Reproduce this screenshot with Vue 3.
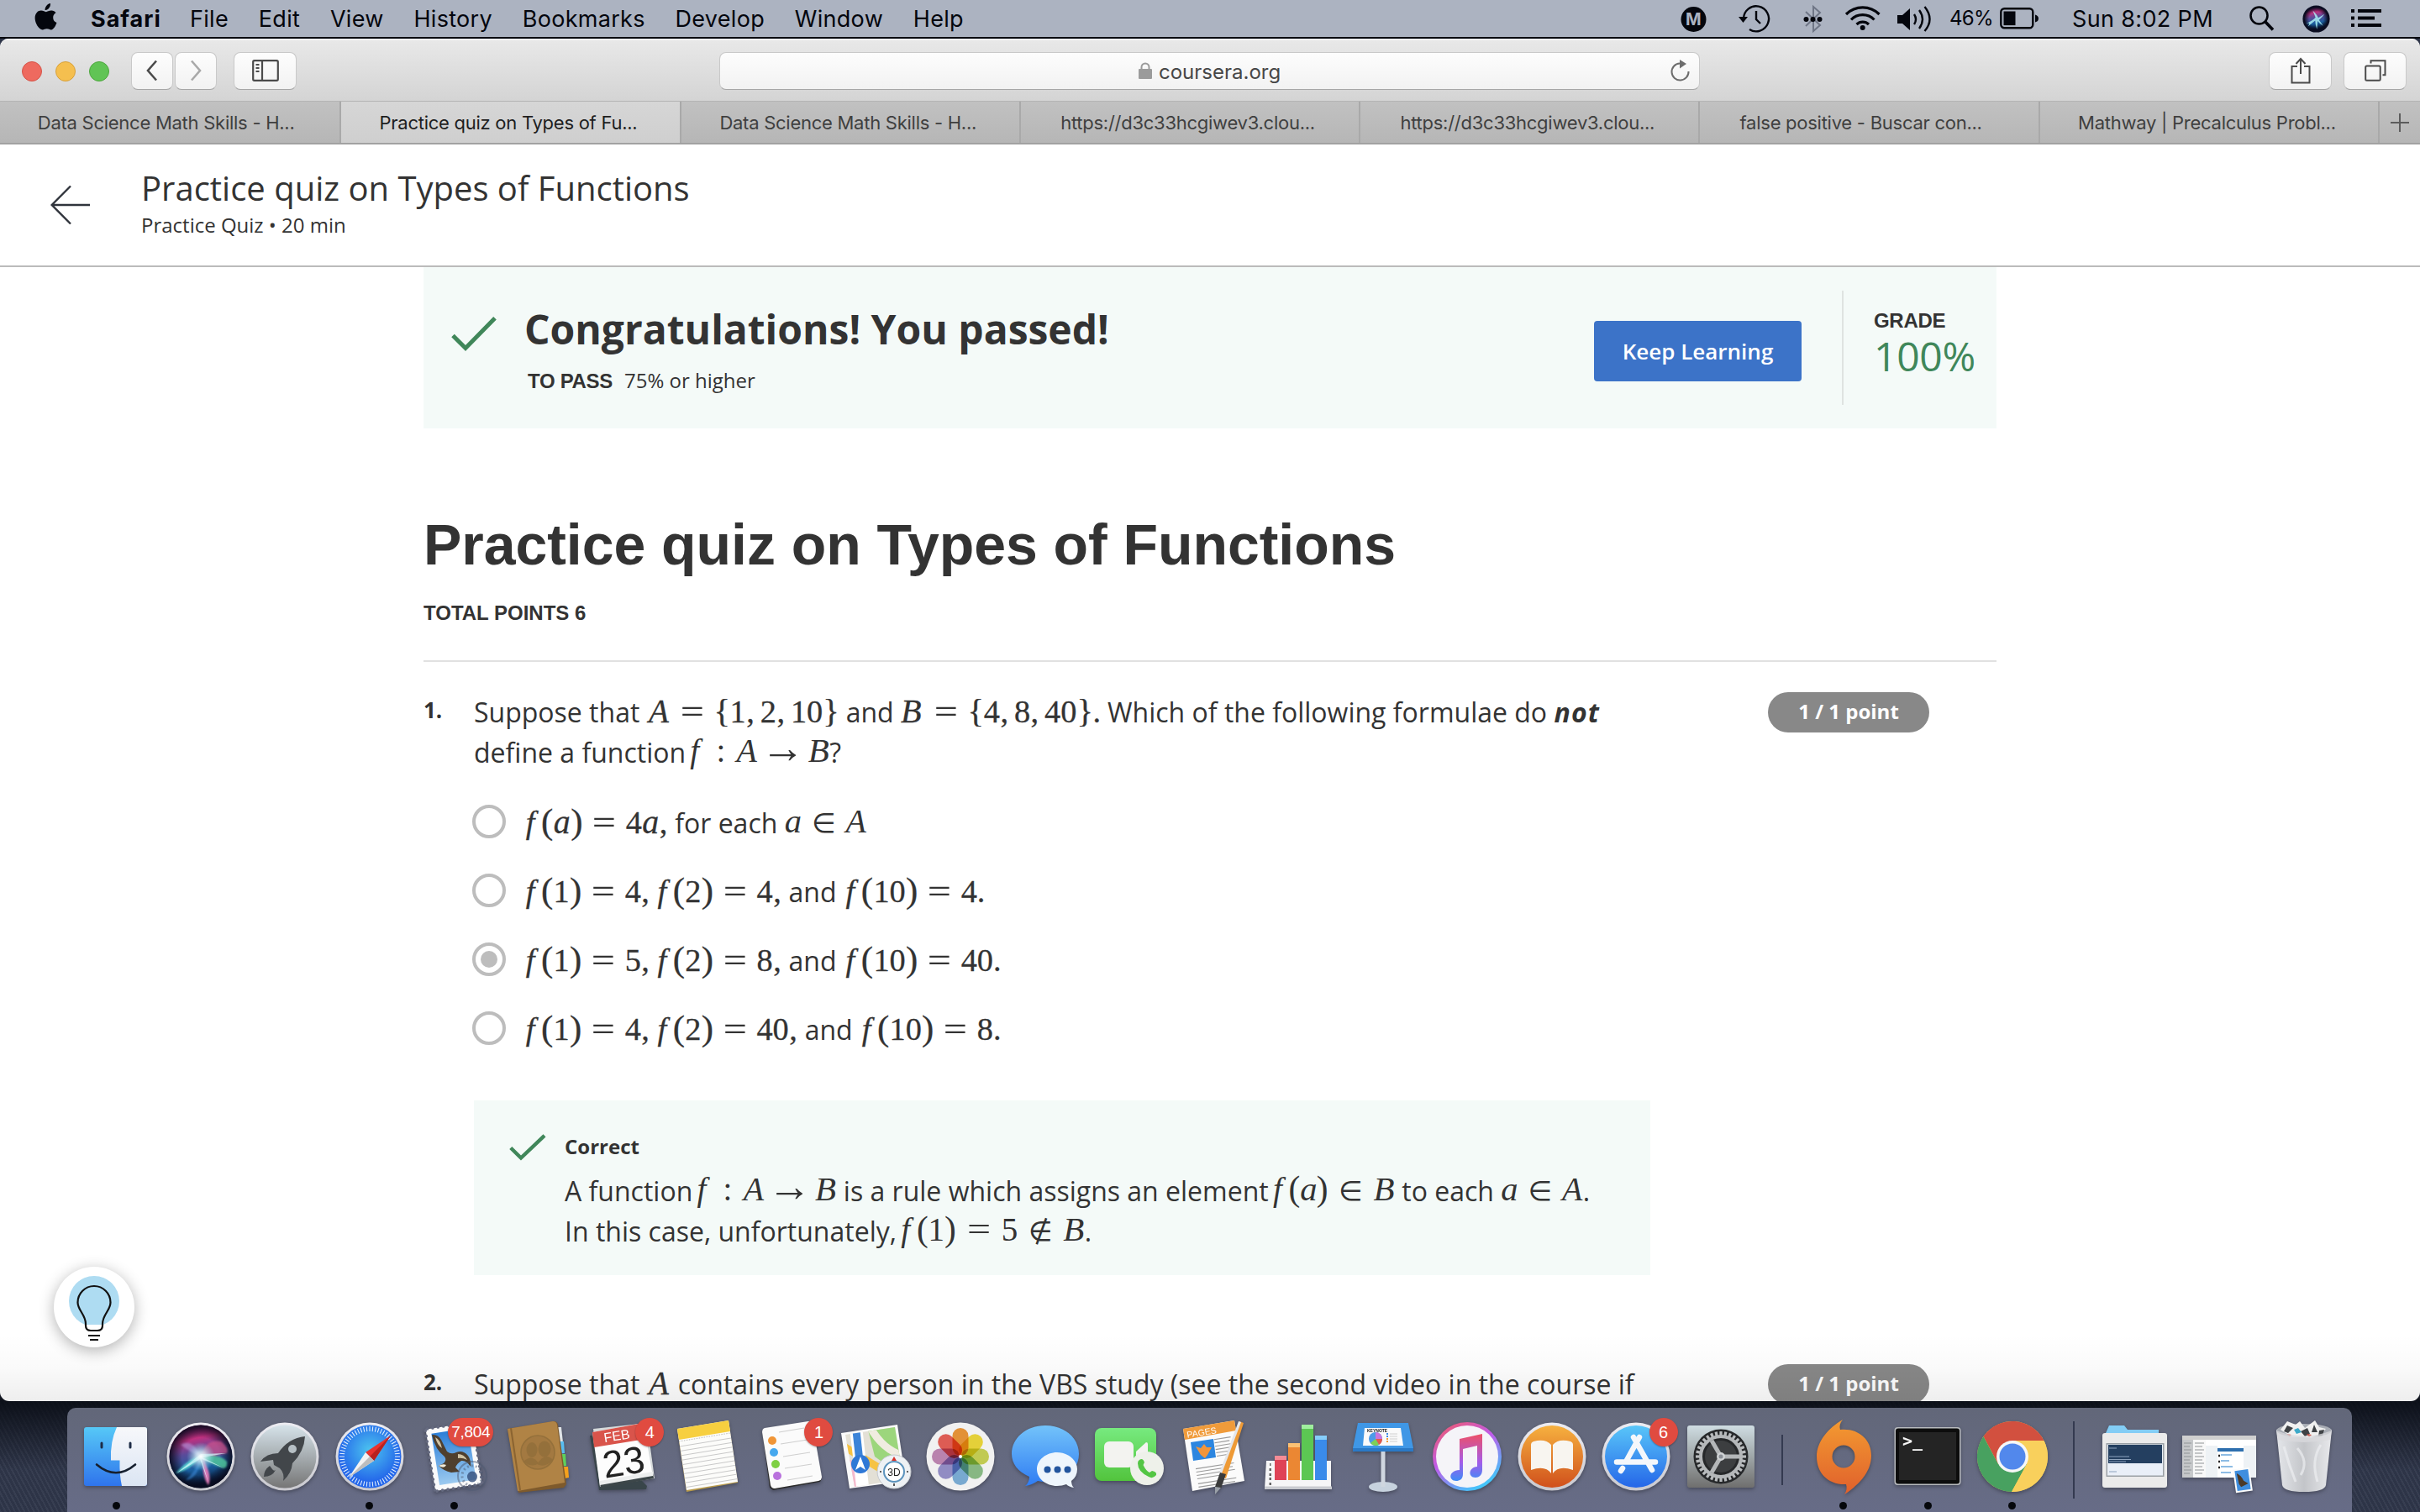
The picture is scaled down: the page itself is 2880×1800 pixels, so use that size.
<script setup>
import { h } from 'vue'

const menus = ['File', 'Edit', 'View', 'History', 'Bookmarks', 'Develop', 'Window', 'Help']
const tabs = [
  { title: 'Data Science Math Skills - H...' },
  { title: 'Practice quiz on Types of Fu...', active: true },
  { title: 'Data Science Math Skills - H...' },
  { title: 'https://d3c33hcgiwev3.clou...' },
  { title: 'https://d3c33hcgiwev3.clou...' },
  { title: 'false positive - Buscar con...', left: true },
  { title: 'Mathway | Precalculus Probl...' },
]

const kinds = {
  A: 'up', B: 'up b', f: 'f', a: 'lo', '=': 'rel eq', '∈': 'rel in', '∉': 'rel in', '→': 'rel to',
  ':': 'rel col', '(': 'par', ')': 'par', '{': 'brace', '}': 'brace', ',': 'com', '.': 'dot',
}
/* Inline formula: one box per symbol, spaced by the symbol's class. */
const Tex = (props) =>
  h('span', { class: ['tex', props.alt ? 'tex-alt' : 'tex-main'] },
    [...props.m.replace(/ /g, '')].map((c) => h('span', { class: 'g ' + (kinds[c] || 'num') }, c)))
Tex.props = ['m', 'alt']

const options = [
  { first: 'f(a) = 4a,', word: 'for each', last: 'a ∈ A', alt: true },
  { first: 'f(1) = 4, f(2) = 4,', word: 'and', last: 'f(10) = 4.' },
  { first: 'f(1) = 5, f(2) = 8,', word: 'and', last: 'f(10) = 40.', picked: true },
  { first: 'f(1) = 4, f(2) = 40,', word: 'and', last: 'f(10) = 8.' },
]

const ticks = Array.from({ length: 60 }, (_, i) => i * 6)
const teeth = Array.from({ length: 32 }, (_, i) => i * 11.25)
const petals = ['#f0993a', '#f2dc3c', '#cdd657', '#8fc28b', '#7fb3dc', '#9a94cf', '#c48bb8', '#ea6159']
const noteLines = Array.from({ length: 10 }, (_, i) => -14 + i * 5.4)
const perfX = Array.from({ length: 9 }, (_, i) => -26 + i * 6.5)
const perfY = Array.from({ length: 12 }, (_, i) => -35.7 + i * 6.5)
</script>

<template>
  <div class="desktop">
    <div class="menubar">
      <svg class="apple" viewBox="0 0 28 32"><path d="M19 0c.3 2.600-.7 4.500-2 6-1.400 1.500-2.900 2.200-4.400 2.100-.2-2.300.7-4.200 2-5.600C15.700 1.200 17.500.3 19 0zM25.500 11.300c-2.200 1.400-3.300 3.100-3.300 5.600 0 2.900 1.500 4.900 4.300 6.100-1.200 3.500-3.700 8.300-6.500 8.400-2 .1-2.600-1.200-5.200-1.200s-3.300 1.200-5.200 1.200C5.300 31.400.6 23.600.6 17.600c0-5.600 3.500-9 7.300-9 2.500 0 4.400 1.600 5.900 1.600 1.500 0 3.700-1.800 6.700-1.600 1.900.1 3.800 1 5 2.700z" fill="#04060d"/></svg>
      <b class="appname">Safari</b>
      <div class="menus"><span v-for="m in menus" :key="m">{{ m }}</span></div>
      <svg class="tray" viewBox="0 0 300 44" fill="none" stroke="#04060d">
        <circle cx="15.500" cy="23" r="15" fill="#04060d" stroke="none"/>
        <text x="15.500" y="30" text-anchor="middle" class="mega">M</text>
        <g stroke-width="2.400"><path d="M75 22a15 15 0 1 1 7 13"/><path d="M90 13v10l5 5" /></g>
        <path d="M69 20h11l-5.500 7z" fill="#04060d" stroke="none"/>
        <g stroke="#6f7686" stroke-width="2"><path d="M149 14l17 16-8 7V8l8 7-17 16"/></g>
        <g fill="#04060d" stroke="none"><circle cx="149.500" cy="23" r="3"/><circle cx="157.500" cy="23" r="3"/><circle cx="165.500" cy="23" r="3"/></g>
        <g stroke-width="3.200"><path d="M197 17a28 28 0 0 1 39.500 0"/><path d="M203 23.500a19 19 0 0 1 27.500 0"/><path d="M209.500 29a10.500 10.500 0 0 1 14.500 0"/></g>
        <circle cx="216.700" cy="33" r="3" fill="#04060d" stroke="none"/>
        <path d="M258 18h6l9-8v26l-9-8h-6z" fill="#04060d" stroke="none"/>
        <g stroke-width="2.400"><path d="M278 17q4 6 0 12"/><path d="M284 12q8 11 0 22"/><path d="M290.500 8q12 15 0 29"/></g>
      </svg>
      <span class="pct">46%</span>
      <svg class="battery" viewBox="0 0 48 26"><rect x="1.300" y="1.300" width="38" height="23" rx="4" fill="none" stroke="#04060d" stroke-width="2.400"/><rect x="4.500" y="4.500" width="14" height="16.600" fill="#04060d"/><path d="M42 8.500q4 1 4 4.500t-4 4.500z" fill="#04060d"/></svg>
      <span class="clock">Sun 8:02 PM</span>
      <svg class="lens" viewBox="0 0 30 30" fill="none" stroke="#04060d"><circle cx="11.500" cy="11.500" r="10" stroke-width="2.600"/><path d="M18.500 18.500l9.500 10" stroke-width="3.600"/></svg>
      <svg class="minisiri" viewBox="-40 -40 80 80"><circle r="39" fill="#0b0d22"/><circle r="33" fill="url(#siri)"/><circle r="34" fill="url(#dark)"/><path d="M-30 14Q-8 4-2-4L-10-24Q2-12 6-3L24-14Q14-2 8 3L20 20Q8 12 4 6L2 30Q-3 16-3 5L-24 22Q-14 8-30 14z" fill="#a8eef2" opacity=".85"/></svg>
      <svg class="listicon" viewBox="0 0 36 22" fill="#04060d"><path d="M0 0h4v4H0zM8 0h28v4H8zM0 8.500h4v4H0zM8 8.500h20v4H8zM0 17h4v4H0zM8 17h28v4H8z"/></svg>
    </div>

    <div class="window">
      <div class="toolbar">
        <i class="light red"></i><i class="light amber"></i><i class="light green"></i>
        <div class="btn nav back"><svg viewBox="0 0 16 26" fill="none" stroke="#4b4b4b" stroke-width="2.600"><path d="M13 1.500L3 13l10 11.500"/></svg></div>
        <div class="btn nav"><svg viewBox="0 0 16 26" fill="none" stroke="#a9a9a9" stroke-width="2.600"><path d="M3 1.500L13 13 3 24.500"/></svg></div>
        <div class="btn side"><svg viewBox="0 0 32 26" fill="none" stroke="#4b4b4b" stroke-width="2.200"><rect x="1.200" y="1.200" width="29.600" height="23.600" rx="1.500"/><path d="M12 1v24"/><path d="M4.500 6h4M4.500 10h4M4.500 14h4" stroke-width="1.800"/></svg></div>
        <div class="address">
          <svg class="lock" viewBox="0 0 16 20"><path d="M3.500 9V6a4.500 4.500 0 0 1 9 0v3" fill="none" stroke="#9b9b9b" stroke-width="2"/><rect width="16" height="12" y="8" rx="1" fill="#9b9b9b"/></svg>
          <span>coursera.org</span>
          <svg class="reload" viewBox="0 0 24 26" fill="none"><path d="M11 4.500A10 10 0 1 0 21.500 14" stroke="#6d6d6d" stroke-width="2"/><path d="M11 0l8 5-8 5.500z" fill="#6d6d6d"/></svg>
        </div>
        <div class="btn share"><svg viewBox="0 0 24 32" fill="none" stroke="#4b4b4b" stroke-width="2"><path d="M8 11H1.500v19.500h21V11H16M12 2v18M6.500 8L12 2l5.500 6"/></svg></div>
        <div class="btn share last"><svg viewBox="0 0 26 26" fill="none" stroke="#4b4b4b" stroke-width="2"><rect x="1.200" y="7.500" width="17.500" height="17.300" rx="1.500"/><path d="M7.500 4.500V1.200h17v17h-3"/></svg></div>
      </div>

      <div class="tabs">
        <div v-for="(t, i) in tabs" :key="i" class="tab" :class="{ active: t.active, left: t.left }">{{ t.title }}</div>
        <div class="plus"><svg viewBox="0 0 24 24" stroke="#5c5c5c" stroke-width="2"><path d="M12 1v22M1 12h22"/></svg></div>
      </div>

      <div class="page">
        <header class="head">
          <svg class="arrow" viewBox="0 0 48 48" fill="none" stroke="#30343c" stroke-width="2.400"><path d="M47 24H2M24 1.500L1.700 24 24 46.500"/></svg>
          <div>
            <div class="title">Practice quiz on Types of Functions</div>
            <div class="sub">Practice Quiz • 20 min</div>
          </div>
        </header>

        <main class="content">
          <section class="banner">
            <svg class="bigcheck" viewBox="0 0 54 42" fill="none" stroke="#40875a" stroke-width="5"><path d="M2 22.500l15 15L52 1.800"/></svg>
            <div class="verdict">
              <h2>Congratulations! You passed!</h2>
              <p><b>TO PASS</b><span>75% or higher</span></p>
            </div>
            <div class="keep">Keep Learning</div>
            <div class="grade"><b>GRADE</b><span>100%</span></div>
          </section>

          <h1>Practice quiz on Types of Functions</h1>
          <div class="points">TOTAL POINTS 6</div>

          <section class="question">
            <div class="no">1.</div>
            <div class="body">
              <div class="text">Suppose that <Tex m="A = {1, 2, 10}" /> and <Tex m="B = {4, 8, 40}." /> Which of the following formulae do <b class="not">not</b><br>define a function <Tex m="f : A → B" alt="1" />?</div>
              <div class="options">
                <div v-for="(o, i) in options" :key="i" class="option">
                  <i class="radio" :class="{ picked: o.picked }"></i>
                  <span><Tex :m="o.first" /> {{ o.word }} <Tex :m="o.last" :alt="o.alt" /></span>
                </div>
              </div>
              <div class="feedback">
                <svg class="check" viewBox="0 0 44 32" fill="none" stroke="#40875a" stroke-width="4.400"><path d="M1.800 16.500L14 28.500 42 1.800"/></svg>
                <div>
                  <b>Correct</b>
                  <div class="text">A function <Tex m="f : A → B" alt="1" /> is a rule which assigns an element <Tex m="f(a) ∈ B" alt="1" /> to each <Tex m="a ∈ A" alt="1" />.<br>In this case, unfortunately, <Tex m="f(1) = 5 ∉ B" alt="1" />.</div>
                </div>
              </div>
            </div>
            <div class="pill">1 / 1 point</div>
          </section>

          <section class="question second">
            <div class="no">2.</div>
            <div class="body"><div class="text">Suppose that <Tex m="A" /> contains every person in the VBS study (see the second video in the course if</div></div>
            <div class="pill">1 / 1 point</div>
          </section>
        </main>
        <div class="fade"></div>
        <div class="bulb">
          <svg viewBox="-48 -48 96 96" fill="none" stroke="#111" stroke-width="2.200"><circle cy="-7" r="30" fill="#aedcf2" stroke="none"/><path d="M-9.500 21h19v3q-1 4-4 4H-5.500q-3 0-4-4z" fill="#fff" stroke="none"/><path d="M-10 21V22q0 6 6 6H4q6 0 6-6V20C10 9 19.500 4 19.500-5.500a19.500 19.500 0 0 0-39 0C-19.500 4-10 9-10 20z"/><path d="M-7 34H7M-5 39H5"/></svg>
        </div>
      </div>
    </div>

    <div class="dock">
      <!-- Finder -->
      <div class="slot run"><svg viewBox="-50 -50 100 100">
        <defs>
          <linearGradient id="fin" x2="0" y2="1"><stop stop-color="#56c8f7"/><stop offset="1" stop-color="#2f74ec"/></linearGradient>
          <linearGradient id="pale" x2="0" y2="1"><stop stop-color="#f7f8fb"/><stop offset="1" stop-color="#dbe5f3"/></linearGradient>
          <linearGradient id="rim" x2="0" y2="1"><stop stop-color="#ececf2"/><stop offset="1" stop-color="#c9c9cf"/></linearGradient>
        </defs>
        <rect x="-38" y="-35" width="75" height="70" rx="3" fill="url(#fin)"/>
        <path d="M1-35H34q3 0 3 3V32q0 3-3 3H7Q4 22 4.500 4.500H-6Q-7-18 1-35z" fill="url(#pale)"/>
        <path d="M-17-16v5M17-16v5" stroke="#1d2c46" stroke-width="3" stroke-linecap="round"/>
        <path d="M-23 9.500Q0 29 23 9.500" fill="none" stroke="#16202f" stroke-width="2.600" stroke-linecap="round"/>
      </svg></div>
      <!-- Siri -->
      <div class="slot"><svg viewBox="-50 -50 100 100">
        <defs>
          <linearGradient id="siri" x2=".2" y2="1"><stop stop-color="#4a1752"/><stop offset=".28" stop-color="#c0307f"/><stop offset=".5" stop-color="#5a4b9a"/><stop offset=".75" stop-color="#1a5fa0"/><stop offset="1" stop-color="#081530"/></linearGradient>
          <radialGradient id="dark"><stop offset=".6" stop-color="#07081a" stop-opacity="0"/><stop offset="1" stop-color="#07081a" stop-opacity=".9"/></radialGradient>
          <radialGradient id="glow"><stop stop-color="#fff"/><stop offset=".35" stop-color="#d8f6fa" stop-opacity=".75"/><stop offset="1" stop-color="#7ad8e8" stop-opacity="0"/></radialGradient>
          <filter id="soft"><feGaussianBlur stdDeviation="1.300"/></filter>
        </defs>
        <circle r="40.500" fill="url(#rim)"/><circle r="37.500" fill="url(#siri)"/><circle r="37.500" fill="url(#dark)"/>
        <g filter="url(#soft)">
          <path d="M0 0Q-10-22-24-14Q-14-6 0 0" fill="#b79ae0" opacity=".55"/>
          <path d="M0 0Q6-22 24-18Q34-10 31-4Q12 0 0 0" fill="#d2528a" opacity=".7"/>
          <path d="M0 0Q22-4 31 6Q32 16 24 13Q10 8 0 0" fill="#4fc39a" opacity=".85"/>
          <path d="M0 0Q-12 0-30 20Q-12 16 0 0" fill="#5be0d8" opacity=".85"/>
          <path d="M0 0Q-6 18-18 28Q-2 26 0 0" fill="#3a8ad8" opacity=".6"/>
          <path d="M2 2Q14 22 9 34Q2 26 2 2" fill="#ef7fc0" opacity=".9"/>
        </g>
        <path d="M-29 20L0-3L30-4L2 1L28 14L1 3L9 31L-1 3z" fill="#dffcff" opacity=".7"/>
        <circle r="17" fill="url(#glow)"/>
      </svg></div>
      <!-- Launchpad -->
      <div class="slot"><svg viewBox="-50 -50 100 100">
        <defs><linearGradient id="lp" x2="0" y2="1"><stop stop-color="#d6e3ea"/><stop offset="1" stop-color="#767676"/></linearGradient></defs>
        <circle r="40.500" fill="url(#rim)"/><circle r="37.500" fill="url(#lp)"/>
        <path d="M24-24Q4-22-8-4Q-22-4-29 6L-14 4L-13 10L-6 14Q0 20-2 29Q8 20 9 8Q23-6 24-24z" fill="#42464a"/><circle cx="9" cy="-9" r="5" fill="#b6bfc4"/>
        <path d="M-18 11Q-25 16-25 24Q-15 24-11 16Q-13 18-15 15z" fill="#42464a"/>
      </svg></div>
      <!-- Safari -->
      <div class="slot run"><svg viewBox="-50 -50 100 100">
        <defs><radialGradient id="sf" cy=".4"><stop stop-color="#4cc4ef"/><stop offset="1" stop-color="#2467ea"/></radialGradient></defs>
        <circle r="40.500" fill="url(#rim)"/><circle r="37.500" fill="url(#sf)"/>
        <path v-for="t in ticks" :key="t" d="M0-36v6" :transform="`rotate(${t})`" stroke="#e8f3fd" stroke-width="1"/>
        <path d="M25-25L5 5-5-5z" fill="#e8332f"/><path d="M25-25L5 5 0 0z" fill="#b8221f"/><path d="M-25 25L5 5-5-5z" fill="#f3f3f3"/><path d="M-25 25L5 5 0 0z" fill="#bdbdbd"/>
      </svg></div>
      <!-- Mail -->
      <div class="slot run"><svg viewBox="-50 -50 100 100">
        <defs><linearGradient id="sky" x2="0" y2="1"><stop stop-color="#2c7fd8"/><stop offset="1" stop-color="#9ccaf0"/></linearGradient></defs>
        <g transform="rotate(-9)"><rect x="-28" y="-37" width="56" height="74" fill="#fafafa"/>
          <g fill="#656a80"><circle v-for="p in perfX" :key="'t' + p" :cx="p" cy="-37.500" r="1.800"/><circle v-for="p in perfX" :key="'b' + p" :cx="p" cy="37.500" r="1.800"/><circle v-for="p in perfY" :key="'l' + p" cx="-28.500" :cy="p" r="1.800"/><circle v-for="p in perfY" :key="'r' + p" cx="28.500" :cy="p" r="1.800"/></g>
          <rect x="-22" y="-31" width="44" height="62" fill="url(#sky)"/></g>
        <path d="M-26-26Q-19-27-15-20Q-11-12-8-6Q-3-2 3-5Q11-8 17-1Q21 5 20 12Q15 4 9 5Q4 8 2 13L7 18L-3 19Q-12 17-18 11L-12 8Q-8 4-11 0Q-22-8-26-26z" fill="#4f3f2e"/><path d="M-22-23Q-16-20-14-10Q-20-14-22-23M5-3Q12-3 16 4Q10 1 5 2z" fill="#d0c3a4"/><path d="M-18 11Q-13 8-9 10Q-11 15-18 11z" fill="#f1ead8"/>
        <circle cx="22" cy="23" r="17" fill="none" stroke="#4d5a72" stroke-width="2" opacity=".5"/><circle cx="22" cy="23" r="12" fill="none" stroke="#4d5a72" stroke-width="3" stroke-dasharray="2 3" opacity=".5"/><ellipse cx="22" cy="24" rx="6" ry="6.500" fill="#334e7a" opacity=".8"/>
      </svg><span class="badge wide">7,804</span></div>
      <!-- Contacts -->
      <div class="slot"><svg viewBox="-50 -50 100 100">
        <path d="M18-35l9 0 2 18-8 1z" fill="#dfe3e6"/><path d="M22-18l8 0 1 14-8 1z" fill="#59bdf0"/><path d="M24-3l8 0 1 14-8 1z" fill="#5fd05c"/><path d="M26 12l9 0 1 13-9 2z" fill="#f5a11c"/>
        <path d="M-37-33L18-42q4 0 5 4L33 33l-3 4L-24 43z" fill="#7e5a2c"/><path d="M-37-33L17-42q4 0 5 4L31 31-25 41z" fill="#b08345"/><path d="M-33-34L-22 40" stroke="#8b6431" stroke-width="2"/>
        <circle cx="-1" cy="-5" r="20" fill="#a37941" stroke="#94703b" stroke-width="1.600"/>
        <g fill="#94703b"><ellipse cx="-8" cy="-8" rx="6.500" ry="9"/><path d="M-18 6Q-8-4 0 8Q-8 14-18 6z"/><ellipse cx="7" cy="-9" rx="7.500" ry="9.500"/><path d="M-2 9Q8-6 17 4Q8 14-2 9z"/></g>
      </svg></div>
      <!-- Calendar -->
      <div class="slot"><svg viewBox="-50 -50 100 100">
        <path d="M-39-25l8 0 60 60-1 4L-28 40z" fill="#39454a"/><path d="M-35-33L29-40l9 66L-27 36z" fill="#d6dadb"/><path d="M-36-29L25-40 36 24-27 35z" fill="#fdfdfd"/><path d="M-36-29L25-40 28-21-34-11z" fill="#d9544b"/>
        <path d="M-27 31L36 20l1 6L-26 38z" fill="#3c4649"/><path d="M-27 29L36 18v5L-27 34z" fill="#eceeee"/>
        <g transform="rotate(-9)"><text x="-3" y="-20" text-anchor="middle" class="feb">FEB</text><text x="0" y="22" text-anchor="middle" class="day">23</text></g>
      </svg><span class="badge">4</span></div>
      <!-- Notes -->
      <div class="slot"><svg viewBox="-50 -50 100 100">
        <path d="M-36-32L25-42 36 31-25 42z" fill="#b89a4a"/><path d="M-36-33L25-43 36 30-25 40z" fill="#fcfcfa"/><path d="M-36-33L25-43 27-30-34-20z" fill="#f7cf3f"/><path d="M-34-18L27-28" stroke="#bbb" stroke-width="1" stroke-dasharray="1.500 1.500"/>
        <path v-for="y in noteLines" :key="y" :d="`M${-33 + (y + 14) * 0.15} ${y + 2}l61-10`" stroke="#c9c9c9" stroke-width="1"/>
      </svg></div>
      <!-- Reminders -->
      <div class="slot"><svg viewBox="-50 -50 100 100">
        <path d="M-35-31L22-41 36 26l-2 4L-22 40l-4-3z" fill="#2b2b2b"/><path d="M-32-34L20-42q4 0 5 4L36 24q0 4-4 5L-20 38q-4 0-5-4L-35-29q0-4 3-5z" fill="#fbfbfb"/>
        <circle cx="-23" cy="-19" r="5" fill="#f09537"/><circle cx="-21" cy="-5" r="5" fill="#46a8ee"/><circle cx="-19" cy="9" r="5" fill="#7fd044"/><circle cx="-17" cy="23" r="5" fill="#b972dd"/>
        <path d="M-15-29l30-5M-13-15l32-5M-10 0l32-5M-8 14l32-5M-5 28l30-5" stroke="#cfcfcf" stroke-width="1.200"/>
      </svg><span class="badge">1</span></div>
      <!-- Maps -->
      <div class="slot"><svg viewBox="-50 -50 100 100">
        <defs><clipPath id="mp"><path d="M-37-26L22-35 32 27-26 36z"/></clipPath></defs>
        <path d="M-42-28L25-38 35 29-32 38z" fill="#fafafa"/>
        <g clip-path="url(#mp)"><path d="M-50-50H50V50H-50z" fill="#e3e0d6"/><path d="M-12-40H40V30L-2 0z" fill="#9cd67c"/><path d="M-8-36Q8-6 36 0" stroke="#f0ece0" stroke-width="9" fill="none"/><path d="M-42-14L40 36" stroke="#f6c344" stroke-width="9"/><path d="M-40 0l18 8v30h-20z" fill="#f4b9cd"/><path d="M-25-40L-16 40" stroke="#fff" stroke-width="15"/><path d="M-25-40L-20 6" stroke="#3c84d8" stroke-width="9"/></g>
        <circle cx="-19" cy="9" r="11" fill="#2f78d6"/><path d="M-19 0l6 16-6-4-6 4z" fill="#fff"/>
        <circle cx="21" cy="18" r="20" fill="#eef1f4" stroke="#c4c8cd"/><circle cx="21" cy="18" r="12" fill="#fff" stroke="#5c93bd" stroke-width="2"/><path d="M21 0l3 5h-6z" fill="#d6322a"/><path d="M21 32v3M4 18h2M36 18h2" stroke="#333" stroke-width="1.600"/><text x="21" y="22.500" text-anchor="middle" class="three">3D</text>
      </svg></div>
      <!-- Photos -->
      <div class="slot"><svg viewBox="-50 -50 100 100"><circle r="40.500" fill="#f1f1f1"/>
        <g class="petals"><rect v-for="(c, i) in petals" :key="c" x="-9.500" y="-34" width="19" height="33" rx="9.500" :fill="c" :transform="`rotate(${i * 45})`"/></g><circle r="2" fill="#fff"/>
      </svg></div>
      <!-- Messages -->
      <div class="slot"><svg viewBox="-50 -50 100 100">
        <defs><linearGradient id="msg" x2="0" y2="1"><stop stop-color="#73c3fa"/><stop offset="1" stop-color="#2f7cf3"/></linearGradient></defs>
        <path d="M0-37C23-37 40-22 40-3S23 30 0 30q-5 0-9-1-7 5-15 6 5-4 5-11C-33 18-40 8-40-3-40-22-23-37 0-37z" fill="url(#msg)"/>
        <path d="M14-5C27-5 38 4 38 15q0 9-7 14 0 5 3 8-6-1-9-4-5 2-11 2C1 35-10 26-10 15S1-5 14-5z" fill="#eef5fc"/><g fill="#23559e"><circle cx="2.500" cy="15.500" r="4"/><circle cx="14.500" cy="15.500" r="4"/><circle cx="26.500" cy="15.500" r="4"/></g>
      </svg></div>
      <!-- FaceTime -->
      <div class="slot"><svg viewBox="-50 -50 100 100">
        <defs><linearGradient id="ft" x2="0" y2="1"><stop stop-color="#77ea7f"/><stop offset="1" stop-color="#52c43d"/></linearGradient></defs>
        <rect x="-41" y="-34" width="73" height="63" rx="8" fill="url(#ft)"/><rect x="-30" y="-18" width="35" height="31" rx="6" fill="#f3f3f0"/><path d="M8-6L20-17q2 0 2 2V10L8 2z" fill="#f3f3f0"/>
        <circle cx="21" cy="14" r="20" fill="#eef1ea"/><path d="M12 4q4-3 6 3-2 3-1 4 3 6 7 8l3-2q6 1 5 5-4 5-9 2Q10 18 10 8q0-3 2-4z" fill="#53c644"/>
      </svg></div>
      <!-- Pages -->
      <div class="slot"><svg viewBox="-50 -50 100 100">
        <path d="M-37-33L24-43 36 29-26 41z" fill="#fbfbfb"/><path d="M-37-33L24-43 26-31-35-20z" fill="#f09b3a"/>
        <path d="M-28-17l27-4 3 22-27 4z" fill="#2c86e0"/><path d="M-22-12l6 2 4-5 3 4 6 0-5 9-3 4-5-4z" fill="#f2953a"/>
        <g transform="rotate(-9)"><text x="-28" y="-27" class="pg">PAGES</text><path d="M3-20h20M3-16h18M3-12h20M3-8h18M3-4h20M3 0h16M-24 11h46M-24 15h44M-24 19h46M-24 23h30M-24 29h46M-24 33h44" stroke="#9a9a9a" stroke-width="1.100"/></g>
        <path d="M30-42l5 2L14 26l-8-2z" fill="#ee9a36"/><path d="M29-42l3 1L9 20l-3 0z" fill="#e4e6ea"/><path d="M12 18l7 2-6 17-7-2z" fill="#3b3b3b" transform="translate(-5 1)"/><path d="M1 36l7 1-7 8z" fill="#9aa0a8"/>
      </svg></div>
      <!-- Numbers -->
      <div class="slot"><svg viewBox="-50 -50 100 100">
        <path d="M-38 5H39V38H-40z" fill="#f6f6f7"/><path d="M-40 35.500H40V39H-40z" fill="#c9cbd0"/>
        <rect x="-28" y="-1" width="14" height="29" fill="#df4256"/><rect x="-28" y="-1" width="14" height="5" fill="#f48b96"/><rect x="-12" y="-16" width="14" height="44" fill="#eb8733"/><rect x="-12" y="-16" width="14" height="5" fill="#fbc174"/><rect x="4" y="-38" width="14" height="66" fill="#5cc753"/><rect x="4" y="-38" width="14" height="5" fill="#9fee9e"/><rect x="20" y="-25" width="14" height="53" fill="#3a8bea"/><rect x="20" y="-25" width="14" height="5" fill="#86cdf9"/>
        <g fill="#666"><path d="M-34 8h1.500v3h-1.500zM-34.500 14h2.500v3h-2.500zM-34.500 20h2.500v3h-2.500zM-34.500 25h2.500v3h-2.500zM-34.500 31h2.500v3h-2.500z"/></g>
      </svg></div>
      <!-- Keynote -->
      <div class="slot"><svg viewBox="-50 -50 100 100">
        <ellipse cy="36" rx="17" ry="6" fill="#c7d2de"/><rect x="-2.500" y="-6" width="5" height="42" fill="#cfd6df"/><path d="M-30-40H30L36-10H-36z" fill="#3f97e6"/><path d="M-36-10H36V-6H-36z" fill="#2a79c6"/><path d="M-22-34H21L24-13H-24z" fill="#fafafa"/>
        <text x="-19" y="-29" class="kn">KEYNOTE</text><circle cx="-9" cy="-21" r="8" fill="#4d9be8"/><path d="M-9-21v-8a8 8 0 0 1 8 8z" fill="#c975dd"/><path d="M-9-21h8a8 8 0 0 1-4 7z" fill="#e65a4a"/><path d="M-9-21l4 7a8 8 0 0 1-10-2z" fill="#7fcf55"/>
        <path d="M4-27h2M4-24h2" stroke="#3b8bea" stroke-width="2"/><path d="M4-21h2M4-18h2" stroke="#f09b3a" stroke-width="2"/><path d="M8-27h9M8-24h9M8-21h9M8-18h9" stroke="#d0d0d0"/>
      </svg></div>
      <!-- iTunes -->
      <div class="slot"><svg viewBox="-50 -50 100 100">
        <defs><linearGradient id="it" x2=".6" y2="1"><stop stop-color="#f65a5a"/><stop offset=".5" stop-color="#c05bea"/><stop offset="1" stop-color="#43c6fb"/></linearGradient><linearGradient id="itn" x2="0" y2="1"><stop stop-color="#ee4f66"/><stop offset=".6" stop-color="#a55be8"/><stop offset="1" stop-color="#3d8cf7"/></linearGradient></defs>
        <circle r="41" fill="url(#it)"/><circle r="37" fill="#f5f4f8"/><path d="M-9-21L18-27V16c0 6-4 9-8 9-9 0-9-12 2-13V-13L-5-9V21c0 6-4 8-8 8-9 0-10-12 4-13z" fill="url(#itn)"/>
      </svg></div>
      <!-- iBooks -->
      <div class="slot"><svg viewBox="-50 -50 100 100">
        <defs><linearGradient id="ib" x2="0" y2="1"><stop stop-color="#f6b13f"/><stop offset="1" stop-color="#d0501c"/></linearGradient></defs>
        <circle r="40.500" fill="url(#rim)"/><circle r="37" fill="url(#ib)"/><path d="M-1-14Q-8-22-22-18-25-17-25-14V16Q-8 10-1 20zM1-14Q8-22 22-18 25-17 25-14V16Q8 10 1 20z" fill="#f8f5f0"/>
      </svg></div>
      <!-- App Store -->
      <div class="slot"><svg viewBox="-50 -50 100 100">
        <defs><linearGradient id="as" x2="0" y2="1"><stop stop-color="#59c6f9"/><stop offset="1" stop-color="#2566e8"/></linearGradient></defs>
        <circle r="40.500" fill="url(#rim)"/><circle r="37" fill="url(#as)"/><g stroke="#f4f7fb" stroke-width="6.500" stroke-linecap="round"><path d="M4-23L-12 6M-3-23L19 16M-23 6.500H23M-16 14l-2 3"/></g>
      </svg><span class="badge">6</span></div>
      <!-- System Preferences -->
      <div class="slot"><svg viewBox="-50 -50 100 100">
        <defs><linearGradient id="sp" x2="0" y2="1"><stop stop-color="#cfdde2"/><stop offset="1" stop-color="#6f6f6e"/></linearGradient></defs>
        <rect x="-40" y="-37" width="80" height="74" rx="3" fill="url(#sp)"/><circle r="32.500" fill="#26282a"/><path v-for="t in teeth" :key="t" d="M-1.600-30h3.200v6h-3.200z" :transform="`rotate(${t})`" fill="#b9bcbe"/><circle r="24" fill="none" stroke="#b4b7b9" stroke-width="4"/><circle r="19" fill="#3c3e40"/>
        <g stroke="#b4b7b9" stroke-width="5"><path d="M0 0H22M0 0L-11-19M0 0L-11 19"/></g><circle r="5" fill="#cfd2d4"/><circle r="2.500" fill="#8b9097"/>
      </svg></div>
      <div class="sep"><i></i></div>
      <!-- Origin -->
      <div class="slot run"><svg viewBox="-50 -50 100 100">
        <defs><linearGradient id="or" x2="0" y2="1"><stop stop-color="#f39a31"/><stop offset="1" stop-color="#e0602c"/></linearGradient></defs>
        <path d="M-1-44Q-6-38-4-32C18-34 33-20 33-1 33 17 20 30 12 37Q6 42 1 45 5 39 3 33C-18 34-32 20-32 0-32-18-18-34-1-44zM0-13.500A13 13 0 1 0 0 13.500 13 13 0 1 0 0-13.500z" fill="url(#or)" fill-rule="evenodd"/>
      </svg></div>
      <!-- Terminal -->
      <div class="slot run"><svg viewBox="-50 -50 100 100">
        <rect x="-39.500" y="-35" width="79" height="69" rx="4" fill="#b9bcbf"/><rect x="-38" y="-33.500" width="76" height="66" rx="3" fill="#0d0d0d"/><rect x="-34" y="-29" width="68" height="57" fill="#242424"/><text x="-30" y="-12" class="term">&gt;_</text>
      </svg></div>
      <!-- Chrome -->
      <div class="slot run"><svg viewBox="-50 -50 100 100">
        <circle r="42" fill="#f9d05c"/><path d="M-34.500-24A42 42 0 0 1 37.500-19H0L-17 9z" fill="#d2503f"/><path d="M-34.500-24A42 42 0 0 0-1 42L17 9-17 9z" fill="#48a160"/><path d="M0-19H37.500A42 42 0 0 1-1 42L17 9z" fill="#f9d05c"/><circle r="19" fill="#f7f7f7"/><circle r="15.500" fill="#5288ec"/>
      </svg></div>
      <div class="sep tall"><i></i></div>
      <!-- Folder stack -->
      <div class="slot"><svg viewBox="-50 -50 100 100">
        <path d="M-35-28l4-9h18l4 5h37v9h-63z" fill="#83cdf5"/><rect x="-39" y="-28" width="77" height="65" rx="3" fill="#ebebeb"/><rect x="-34.500" y="-16" width="69" height="40" fill="#9aa0a6"/><rect x="-33" y="-14.500" width="66" height="37" fill="#e9eff8"/><rect x="-32" y="-14" width="64" height="22" fill="#243f60"/>
        <path d="M-31-10h9M-31 0h24M-31 3.500h26M-31 6h20M-31 18h9" stroke="#8ea3bd" stroke-width="1.200"/>
      </svg></div>
      <!-- Minimised mail window -->
      <div class="slot"><svg viewBox="-50 -50 100 100">
        <rect x="-44" y="-25" width="88" height="50" fill="#eef2f5"/><rect x="-44" y="-25" width="88" height="5" fill="#cfcfcf"/><rect x="-44" y="-20" width="13" height="45" fill="#c6c8ca"/><rect x="-31" y="-20" width="15" height="45" fill="#f8f8f8"/><path d="M-42-16h9M-42-12h7M-42-8h9M-42-4h7M-42 0h9M-42 4h7M-42 8h9M-42 12h7M-42 16h9M-42 20h7M-29-16h11M-29-12h9M-29-8h11M-29-4h9M-29 0h11M-29 4h9M-29 8h11M-29 12h9M-29 16h11M-29 20h9" stroke="#909396" stroke-width="1.200"/>
        <rect x="-16" y="-20" width="60" height="7" fill="#fff"/><rect x="-2" y="-13" width="31" height="38" fill="#fff"/><rect x="-2" y="-10" width="31" height="4" fill="#2e6fae"/><path d="M2-2h13M2 5h10M2 12h14M2 19h12" stroke="#6aa6dc" stroke-width="1.400"/><path d="M-1-1h2M-1 6h2M-1 13h2" stroke="#222" stroke-width="2.500"/>
        <g transform="translate(28 28) rotate(-8)"><rect x="-10" y="-14" width="20" height="28" fill="#fafafa"/><rect x="-8" y="-12" width="16" height="24" fill="#3f8ede"/><path d="M-6-9Q-1-6 1 1L6 5-3 8-5 4z" fill="#4c3a28"/></g>
      </svg></div>
      <!-- Trash -->
      <div class="slot"><svg viewBox="-50 -50 100 100">
        <defs><linearGradient id="tr"><stop stop-color="#e4e6ea"/><stop offset=".5" stop-color="#c3c5c9"/><stop offset="1" stop-color="#e8e9ec"/></linearGradient></defs>
        <path d="M-33-32H33L26 34Q24 42 0 42T-26 34z" fill="url(#tr)"/><ellipse cy="-31" rx="33" ry="8" fill="#a9adb5"/>
        <path d="M-28-32l8-10 10 4 5-4 6 8 12-9 5 8 8 2-6 6-12 5-10-1-12 0z" fill="#f0f0f0"/><path d="M-20-37l7 3-6 6-5-2zM-4-30l8-4 3 7-6 3zM12-38l4 9-7 0zM18-31l6-1-2 7-5 1z" fill="#3f4246"/><path d="M-12-32l5-2 4 5-6 2z" fill="#3da9c9"/><path d="M3-27l6 1-3 3zM-21-27l6 1-2 2z" fill="#c84a3c"/>
        <path d="M-33-31Q0-18 33-31L31-20Q0-14-31-20z" fill="#d9dade" opacity=".75"/><path d="M-24-12Q-18 10-10 30M20-14Q8 4 16 30M-8-10Q6 6-4 22" stroke="#eceef1" stroke-width="3" fill="none" opacity=".7"/>
      </svg></div>
    </div>
  </div>
</template>

<style>
html, body { margin: 0; overflow: hidden; background: #232838; }
.tex { font: 38.3px/0 "Liberation Serif", serif; white-space: nowrap; }
.tex-main { -webkit-text-stroke: .3px currentColor; }
.tex .g { display: inline-block; text-align: center; width: .5em; line-height: 0; }
.tex .up { font-style: italic; width: .735em; text-indent: 0; font-size: 1.02em; }
.tex .b { font-size: 1.05em; width: .71em; text-indent: -.1em; }
.tex .f { font-style: italic; width: .54em; text-align: left; text-indent: .07em; }
.tex .lo { font-style: italic; width: .51em; font-size: 1.04em; }
.tex .com, .tex .dot { width: .278em; }
.tex .dot { width: .24em; }
.tex .com:not(:last-child) { margin-right: .167em; }
.tex .par { font-size: 1.12em; width: .347em; }
.tex .brace { font-size: 1.06em; width: .472em; }
.tex .rel { width: .778em; margin: 0 .278em; }
.tex .eq { transform: scaleX(1.28); }
.tex .in { font-family: "DejaVu Sans", sans-serif; font-size: .84em; width: .988em; margin: 0 .331em; }
.tex .to { transform: translateY(-3px) scale(1.34); }
.tex-alt { font-size: 39px; }
.tex-alt .g { vertical-align: 1.5px; }
.tex-alt .up { width: .6em; text-align: left; text-indent: -.02em; }
.tex-alt .b { width: .625em; text-indent: 0; }
.tex-alt .f { width: .4em; text-indent: -.08em; }
.tex-alt .lo { width: .481em; text-align: left; }
.tex-alt .par { font-size: 1.06em; width: .33em; }
.tex-alt .eq { width: .83em; }
.tex-alt .to { width: 1em; }
.tex-alt .col { width: .4em; text-align: left; text-indent: .04em; }
</style>

<style scoped>
.desktop { width: 2880px; height: 1800px; overflow: hidden; display: flex; flex-direction: column; color: #333; font-family: "Open Sans", sans-serif;
  background:
    linear-gradient(180deg, rgba(6,9,16,0) 1640px, rgba(6,9,16,.85) 1668px, rgba(6,9,16,0) 1750px),
    repeating-linear-gradient(62deg, rgba(255,255,255,.035) 0 2px, rgba(0,0,0,.06) 2px 5px), #30374b; }
.menubar { height: 44px; flex: none; background: #acb3c1; border-bottom: 2px solid #03060f; display: flex; align-items: center; padding-left: 41px; font: 27px/44px Inter, sans-serif; letter-spacing: .35px; color: #04060d; }
.appname, .menus, .clock { padding-top: 1px; }
.apple { width: 28px; height: 32px; margin-top: -5px; }
.appname { font-weight: 700; letter-spacing: 1px; margin-left: 39px; width: 118px; }
.menus { display: flex; gap: 35.800px; flex: 1; letter-spacing: .3px; }
.tray { width: 300px; height: 44px; margin-right: 20px; }
.mega { font: 700 20px Inter, sans-serif; fill: #acb3c1; stroke: none; }
.pct { font-size: 24px; letter-spacing: -.7px; width: 60px; }
.battery { width: 48px; height: 26px; }
.clock { margin-left: 38px; width: 211px; }
.lens { width: 30px; height: 30px; }
.minisiri { width: 33px; height: 33px; margin-left: 33px; }
.listicon { width: 36px; height: 22px; margin: 0 46px 0 25px; }

.window { height: 1622px; flex: none; border-radius: 10px 10px 11px 11px; overflow: hidden; background: #fff; display: flex; flex-direction: column; }
.toolbar { height: 75px; flex: none; box-sizing: border-box; background: linear-gradient(#e8e8e8, #d4d4d4); border-top: 2px solid #f4f4f4; border-bottom: 1px solid #b4b4b4; display: flex; align-items: center; padding: 0 16px 0 26px; }
.light { width: 24px; height: 24px; border-radius: 50%; margin-right: 16px; box-sizing: border-box; flex: none; margin-top: 1px; }
.red { background: #ee6a5f; border: 1px solid #d65449; }
.amber { background: #f5bf4f; border: 1px solid #d8a13b; }
.green { background: #61c455; border: 1px solid #4ea73e; }
.btn, .address { height: 45px; box-sizing: border-box; border: 1px solid #c9c9c9; border-bottom-color: #a6a6a6; border-radius: 8px; background: linear-gradient(#fdfdfd, #f2f2f2); display: flex; align-items: center; justify-content: center; flex: none; }
.nav { width: 50px; margin-right: 20px; }
.nav svg { width: 16px; height: 26px; }
.nav.back { margin: 0 2px 0 10px; }
.side { width: 75px; }
.side svg { width: 32px; height: 26px; }
.address { width: 1167px; margin-left: 503px; font: 24px Inter, sans-serif; color: #474747; padding: 3px 10px 0 0; margin-right: auto; }
.lock { width: 16px; height: 20px; margin-left: 498px; margin-right: 8px; margin-top: -3px; }
.reload { width: 24px; height: 26px; margin-left: auto; margin-top: -3px; }
.share { width: 75px; margin-right: 14px; }
.share svg { width: 24px; height: 32px; }
.share.last { margin-right: 0; }
.share.last svg { width: 26px; height: 26px; }
.tabs { height: 51px; flex: none; box-sizing: border-box; display: flex; background: linear-gradient(#c1c1c1, #b6b6b6); border-bottom: 2px solid #a2a2a2; font: 22px/50px Inter, sans-serif; letter-spacing: -.26px; color: #3f3f3f; }
.tab { width: 404.300px; flex: none; box-sizing: border-box; border-right: 2px solid #a9a9a9; text-align: center; padding-right: 5px; white-space: nowrap; }
.tab:first-child { width: 406.300px; padding-right: 9px; }
.tab.left { padding-right: 20px; }
.active { background: linear-gradient(#d6d6d6, #cfcfcf); color: #1e1e1e; }
.plus { flex: 1; display: flex; align-items: center; justify-content: center; }
.plus svg { width: 24px; height: 24px; }

.page { position: relative; flex: 1; overflow: hidden; }
.head { height: 144px; border-bottom: 2px solid #bbb; display: flex; padding-left: 60px; background: #fff; }
.head > div { padding-top: 28px; }
.arrow { width: 48px; height: 48px; margin: 48px 60px 0 0; }
.title { font-size: 40px; line-height: 48px; }
.sub { font-size: 24px; line-height: 40px; }
.content { margin-left: 504px; width: 1872px; }
.banner { height: 192px; background: #f4faf8; display: flex; }
.bigcheck { width: 54px; height: 42px; margin: 59px 33px 0 33px; }
.verdict { flex: 1; padding-top: 42px; white-space: nowrap; }
h2 { margin: 0 0 11px; font-size: 48px; line-height: 64px; font-weight: 700; }
p { margin: 0 0 0 4px; font-size: 24px; line-height: 36px; display: flex; align-items: baseline; gap: 14px; }
p b, .grade b, .points { font: 700 24px/30px "Liberation Sans", sans-serif; letter-spacing: -.3px; }
.keep { width: 247px; height: 72px; line-height: 72px; margin: 64px 48px 0 0; border-radius: 4px; background: #3c73c8; color: #fff; font-size: 26px; font-weight: 600; text-align: center; }
.grade { width: 146px; height: 136px; box-sizing: border-box; margin: 28px 38px 0 0; padding: 21px 0 0 36px; border-left: 2px solid #dfe3e1; display: flex; flex-direction: column; }
.grade span { font-size: 48px; line-height: 54px; color: #40875a; letter-spacing: -.3px; }
h1 { margin: 98px 0 27px; font: 700 68px/80px "Liberation Sans", sans-serif; letter-spacing: -.05px; white-space: nowrap; }
.points { padding-bottom: 41px; border-bottom: 2px solid #e1e1e1; letter-spacing: 0; }
.question { display: flex; padding-top: 36px; }
.second { padding-top: 106px; }
.no { width: 60px; font-size: 26px; font-weight: 700; line-height: 42px; }
.body { width: 1540px; }
.text { font-size: 32px; line-height: 48px; white-space: nowrap; }
.not { font-style: italic; letter-spacing: 1.200px; }
.pill { width: 192px; height: 48px; border-radius: 24px; background: #888; color: #fff; font-size: 24px; font-weight: 700; line-height: 46px; text-align: center; }
.options { margin: 38px 0 64px -2px; display: flex; flex-direction: column; gap: 40px; font-size: 32px; line-height: 44px; }
.option { display: flex; height: 42px; white-space: nowrap; }
.radio { width: 40px; height: 40px; box-sizing: border-box; border: 4px solid #bdbdbd; border-radius: 50%; margin-right: 21px; display: flex; align-items: center; justify-content: center; }
.picked::after { content: ""; width: 20px; height: 20px; border-radius: 50%; background: #bdbdbd; }
.feedback { width: 1400px; height: 208px; box-sizing: border-box; background: #f4faf8; display: flex; padding: 37px 0 0 42px; }
.feedback b { display: block; font-size: 24px; line-height: 36px; margin-bottom: 11px; }
.check { width: 44px; height: 32px; margin: 3px 22px 0 0; }
.fade { position: absolute; left: 0; right: 0; bottom: 0; height: 80px; background: linear-gradient(rgba(0,0,0,0), rgba(0,0,0,.02) 50%, rgba(0,0,0,.065)); }
.bulb { position: absolute; left: 64px; top: 1336px; width: 96px; height: 96px; border-radius: 50%; background: #fff; box-shadow: 0 4px 18px rgba(0,0,0,.3); }
.bulb svg { width: 96px; height: 96px; display: block; }

.dock { margin: 8px 0 0 80px; width: 2719px; height: 124px; box-sizing: border-box; padding: 8px 0 0 7.800px; border-radius: 10px 10px 0 0; background: linear-gradient(#626779, #676c87); display: flex; }
.slot { width: 100.530px; height: 116px; flex: none; position: relative; display: flex; flex-direction: column; align-items: center; }
.slot > svg { width: 100px; height: 100px; overflow: visible; filter: drop-shadow(0 2px 2px rgba(0,0,0,.3)); }
.run::after { content: ""; width: 9px; height: 9px; border-radius: 50%; background: #05070b; margin-top: 3.500px; }
.sep { width: 45.500px; flex: none; display: flex; justify-content: center; }
.sep i { width: 2px; height: 60px; margin-top: 24px; background: #343a50; }
.tall i { height: 92px; margin-top: 8px; }
.badge { position: absolute; top: 4px; right: 0; width: 34px; height: 34px; border-radius: 17px; background: #e04b40; color: #fff; font: 20px/34px "Liberation Sans", sans-serif; text-align: center; margin-right: 1px; box-shadow: 0 1px 2px rgba(0,0,0,.3); }
.wide { width: 54px; right: 2px; font-size: 19px; letter-spacing: -.3px; }
.feb { font: 16px "Liberation Sans", sans-serif; fill: #fff; }
.day { font: 45px "Liberation Sans", sans-serif; fill: #222; }
.three { font: 12px "Liberation Sans", sans-serif; fill: #222; }
.petals rect { mix-blend-mode: multiply; }
.pg { font: 10.500px "Liberation Sans", sans-serif; fill: #fff; }
.kn { font: 700 5px "Liberation Sans", sans-serif; fill: #222; }
.term { font: 700 20px "DejaVu Sans Mono", monospace; fill: #f5f5f5; }
</style>
